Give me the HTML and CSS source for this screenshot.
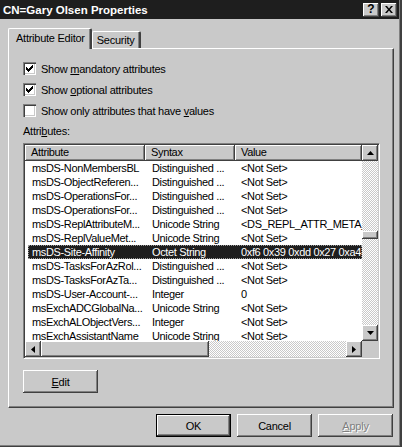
FILE: index.html
```html
<!DOCTYPE html>
<html>
<head>
<meta charset="utf-8">
<link rel="stylesheet" href="styles.css">
</head>
<body>
<div class="window">
  <div class="titlebar">
    <span class="title">CN=Gary Olsen Properties</span>
    <div class="tbtns">
      <span class="tbtn q">?</span>
      <span class="tbtn x"><svg width="8" height="7" viewBox="0 0 8 7"><path d="M0 0h2l2 2.5L6 0h2L5 3.5L8 7H6L4 4.5L2 7H0l3-3.5z" fill="#000"/></svg></span>
    </div>
  </div>
  <div class="client">
    <div class="tabs">
      <div class="tab active">Attribute Editor</div>
      <div class="tab">Security</div>
    </div>
    <div class="panel">
      <div class="check"><span class="box on"><svg width="7" height="7" viewBox="0 0 7 7"><path d="M0 2h1v1h1v1h1V3h1V2h1V1h1V0h1v3H6v1H5v1H4v1H3v1H2V6H1V5H0z" fill="#000"/></svg></span><span>Show <u>m</u>andatory attributes</span></div>
      <div class="check"><span class="box on"><svg width="7" height="7" viewBox="0 0 7 7"><path d="M0 2h1v1h1v1h1V3h1V2h1V1h1V0h1v3H6v1H5v1H4v1H3v1H2V6H1V5H0z" fill="#000"/></svg></span><span>Show <u>o</u>ptional attributes</span></div>
      <div class="check"><span class="box"></span><span>Show only attributes that have <u>v</u>alues</span></div>
      <div class="label">Attri<u>b</u>utes:</div>
      <div class="listbox">
        <div class="lv">
          <div class="hdr"><span class="hc c1">Attribute</span><span class="hc c2">Syntax</span><span class="hc c3">Value</span></div>
          <div class="row"><span class="c1">msDS-NonMembersBL</span><span class="c2">Distinguished ...</span><span class="c3">&lt;Not Set&gt;</span></div>
          <div class="row"><span class="c1">msDS-ObjectReferen...</span><span class="c2">Distinguished ...</span><span class="c3">&lt;Not Set&gt;</span></div>
          <div class="row"><span class="c1">msDS-OperationsFor...</span><span class="c2">Distinguished ...</span><span class="c3">&lt;Not Set&gt;</span></div>
          <div class="row"><span class="c1">msDS-OperationsFor...</span><span class="c2">Distinguished ...</span><span class="c3">&lt;Not Set&gt;</span></div>
          <div class="row"><span class="c1">msDS-ReplAttributeM...</span><span class="c2">Unicode String</span><span class="c3">&lt;DS_REPL_ATTR_META_DATA&gt;</span></div>
          <div class="row"><span class="c1">msDS-ReplValueMet...</span><span class="c2">Unicode String</span><span class="c3">&lt;Not Set&gt;</span></div>
          <div class="row sel"><span class="c1">msDS-Site-Affinity</span><span class="c2">Octet String</span><span class="c3">0xf6 0x39 0xdd 0x27 0xa4 0x1b</span></div>
          <div class="row"><span class="c1">msDS-TasksForAzRol...</span><span class="c2">Distinguished ...</span><span class="c3">&lt;Not Set&gt;</span></div>
          <div class="row"><span class="c1">msDS-TasksForAzTa...</span><span class="c2">Distinguished ...</span><span class="c3">&lt;Not Set&gt;</span></div>
          <div class="row"><span class="c1">msDS-User-Account-...</span><span class="c2">Integer</span><span class="c3">0</span></div>
          <div class="row"><span class="c1">msExchADCGlobalNa...</span><span class="c2">Unicode String</span><span class="c3">&lt;Not Set&gt;</span></div>
          <div class="row"><span class="c1">msExchALObjectVers...</span><span class="c2">Integer</span><span class="c3">&lt;Not Set&gt;</span></div>
          <div class="row"><span class="c1">msExchAssistantName</span><span class="c2">Unicode String</span><span class="c3">&lt;Not Set&gt;</span></div>
        </div>
        <div class="vscroll">
          <span class="sbtn"><svg width="7" height="4" viewBox="0 0 7 4"><path d="M3.5 0L7 4H0z" fill="#000"/></svg></span>
          <span class="track t1"></span>
          <span class="thumb"></span>
          <span class="track grow"></span>
          <span class="sbtn"><svg width="7" height="4" viewBox="0 0 7 4"><path d="M0 0h7L3.5 4z" fill="#000"/></svg></span>
        </div>
        <div class="hscroll">
          <span class="sbtn"><svg width="4" height="7" viewBox="0 0 4 7"><path d="M4 0v7L0 3.5z" fill="#000"/></svg></span>
          <span class="thumb hthumb"></span>
          <span class="track grow"></span>
          <span class="sbtn"><svg width="4" height="7" viewBox="0 0 4 7"><path d="M0 0v7L4 3.5z" fill="#000"/></svg></span>
        </div>
        <div class="corner"></div>
      </div>
      <button class="btn edit"><u>E</u>dit</button>
    </div>
    <div class="buttons">
      <button class="btn default">OK</button>
      <button class="btn">Cancel</button>
      <button class="btn disabled"><u>A</u>pply</button>
    </div>
  </div>
</div>
</body>
</html>
```
FILE: styles.css
```css
* { box-sizing: border-box; }
html, body { margin: 0; padding: 0; }
body {
  width: 402px;
  height: 447px;
  overflow: hidden;
  background: #c9c9c9;
  font-family: "Liberation Sans", Arial, sans-serif;
  font-size: 11px;
  letter-spacing: -0.25px;
  color: #000;
}
u { text-decoration: underline; text-underline-offset: 1px; }
.window {
  width: 402px;
  height: 447px;
  background: #c9c9c9;
  border-right: 2px solid #404040;
  border-bottom: 1px solid #404040;
  box-shadow: inset -1px -1px #808080;
  padding-right: 1px;
  display: flex;
  flex-direction: column;
}
.titlebar {
  height: 19px;
  background: #1e1e1e;
  display: flex;
  align-items: center;
  justify-content: space-between;
  padding: 0 2px 0 3px;
}
.title {
  color: #fff;
  font-weight: bold;
  font-size: 11.5px;
  letter-spacing: 0;
}
.tbtns { display: flex; gap: 2px; }
.tbtn {
  width: 16px;
  height: 14px;
  background: #c9c9c9;
  box-shadow: inset -1px -1px #404040, inset 1px 1px #fff, inset -2px -2px #808080;
  display: flex;
  align-items: center;
  justify-content: center;
  font-weight: bold;
  font-size: 12px;
  line-height: 14px;
  letter-spacing: 0;
}
.tbtn.q { padding-bottom: 1px; }
.client {
  flex: 1;
  padding: 9px 5px 0 8px;
  display: flex;
  flex-direction: column;
}
.tabs {
  display: flex;
  align-items: flex-end;
  height: 20px;
  position: relative;
  z-index: 1;
}
.tab {
  height: 17px;
  padding: 1px 4px 0 4px;
  border-top: 1px solid #fff;
  border-left: 1px solid #fff;
  border-right: 2px solid #404040;
  border-radius: 2px 2px 0 0;
  box-shadow: inset -1px 0 #808080;
  line-height: 14px;
  white-space: nowrap;
}
.tab.active {
  height: 21px;
  margin-bottom: -1px;
  padding: 2px 5px 0 7px;
  background: #c9c9c9;
}
.panel {
  height: 360px;
  border-top: 1px solid #fff;
  border-left: 1px solid #fff;
  border-right: 1px solid #404040;
  border-bottom: 1px solid #404040;
  box-shadow: inset -1px -1px #808080;
  padding: 13px 0 0 14px;
  display: flex;
  flex-direction: column;
  align-items: flex-start;
}
.check {
  display: flex;
  align-items: center;
  gap: 5px;
  height: 13px;
  margin-bottom: 8px;
  white-space: nowrap;
}
.box {
  width: 13px;
  height: 13px;
  background: #fff;
  box-shadow: inset 1px 1px #808080, inset 2px 2px #404040, inset -1px -1px #fff, inset -2px -2px #c9c9c9;
  display: flex;
  align-items: center;
  justify-content: center;
}
.label {
  height: 13px;
  line-height: 13px;
}
.listbox {
  margin-top: 5px;
  width: 357px;
  height: 216px;
  border-top: 1px solid #808080;
  border-left: 1px solid #808080;
  border-right: 1px solid #fff;
  border-bottom: 1px solid #fff;
  box-shadow: inset 1px 1px #404040, inset -1px -1px #c9c9c9;
  padding: 1px;
  display: grid;
  grid-template-columns: 337px 16px;
  grid-template-rows: 196px 16px;
  background: #fff;
}
.lv { overflow: hidden; background: #fff; letter-spacing: -0.35px; }
.hdr { display: flex; height: 16px; }
.hc {
  background: #c9c9c9;
  box-shadow: inset -1px -1px #404040, inset 1px 1px #fff, inset -2px -2px #808080;
  height: 16px;
  line-height: 15px;
  padding-left: 6px;
}
.c1 { width: 120px; flex: none; }
.c2 { width: 90px; flex: none; }
.c3 { flex: 1; min-width: 0; }
.row span, .hc { white-space: nowrap; overflow: hidden; }
.row {
  display: flex;
  height: 14px;
  line-height: 14px;
}
.row .c1 { padding-left: 7px; }
.row .c2 { padding-left: 7px; }
.row .c3 { padding-left: 6px; }
.row.sel {
  background: #1e1e1e;
  color: #fff;
  margin-left: 3px;
  outline: 1px dotted #9a9a9a;
  outline-offset: -1px;
}
.row.sel .c1 { width: 117px; padding-left: 4px; }
.vscroll, .hscroll {
  display: flex;
  background: repeating-conic-gradient(#fff 0 25%, #c9c9c9 0 50%) 0 0 / 2px 2px;
}
.vscroll { flex-direction: column; }
.sbtn {
  width: 16px;
  height: 16px;
  flex: none;
  background: #c9c9c9;
  box-shadow: inset -1px -1px #404040, inset 1px 1px #fff, inset -2px -2px #808080;
  display: flex;
  align-items: center;
  justify-content: center;
}
.track.t1 { height: 70px; flex: none; }
.track.grow { flex: 1; }
.thumb {
  flex: none;
  width: 16px;
  height: 8px;
  background: #c9c9c9;
  box-shadow: inset -1px -1px #404040, inset 1px 1px #fff, inset -2px -2px #808080;
}
.hthumb { width: 168px; height: 16px; }
.corner { background: #c9c9c9; }
.btn {
  width: 75px;
  height: 23px;
  font-family: "Liberation Sans", Arial, sans-serif;
  font-size: 11px;
  letter-spacing: -0.25px;
  color: #000;
  background: #c9c9c9;
  border: none;
  padding: 0;
  box-shadow: inset -1px -1px #404040, inset 1px 1px #fff, inset -2px -2px #808080;
}
.btn.edit { margin-top: 11px; }
.btn.default {
  box-shadow: inset 0 0 0 1px #000, inset -2px -2px #404040, inset 2px 2px #fff, inset -3px -3px #808080;
}
.btn.disabled { color: #808080; text-shadow: 1px 1px #fff; }
.buttons {
  display: flex;
  justify-content: flex-end;
  gap: 6px;
  margin-top: 6px;
  padding-right: 1px;
}
```
